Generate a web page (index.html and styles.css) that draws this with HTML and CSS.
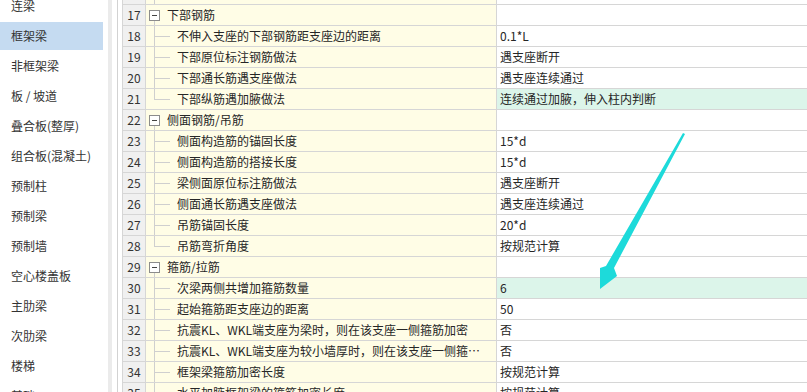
FILE: index.html
```html
<!DOCTYPE html>
<html lang="zh-CN">

<head>
  <meta charset="UTF-8">
  <meta name="viewport" content="width=device-width, initial-scale=1.0">
  <title>计算设置</title>
  <link rel="stylesheet" href="styles.css">
</head>

<body>
  <div class="page">
    <ul class="menu">
      <li>连梁</li>
      <li class="current">框架梁</li>
      <li>非框架梁</li>
      <li>板 / 坡道</li>
      <li>叠合板(整厚)</li>
      <li>组合板(混凝土)</li>
      <li>预制柱</li>
      <li>预制梁</li>
      <li>预制墙</li>
      <li>空心楼盖板</li>
      <li>主肋梁</li>
      <li>次肋梁</li>
      <li>楼梯</li>
      <li>基础</li>
    </ul>
    <div class="gutter"></div>

    <div class="grid-wrap">
      <table class="grid">
        <tr>
          <td class="num">16</td>
          <td class="name"><div class="cell"><span class="branch"></span><span class="label"></span></div></td>
          <td class="val"></td>
        </tr>
        <tr class="group">
          <td class="num">17</td>
          <td class="name"><div class="cell"><span class="toggle"></span><span class="label">下部钢筋</span></div></td>
          <td class="val"></td>
        </tr>
        <tr>
          <td class="num">18</td>
          <td class="name"><div class="cell"><span class="branch"></span><span class="label">不伸入支座的下部钢筋距支座边的距离</span></div></td>
          <td class="val">0.1*L</td>
        </tr>
        <tr>
          <td class="num">19</td>
          <td class="name"><div class="cell"><span class="branch"></span><span class="label">下部原位标注钢筋做法</span></div></td>
          <td class="val">遇支座断开</td>
        </tr>
        <tr>
          <td class="num">20</td>
          <td class="name"><div class="cell"><span class="branch"></span><span class="label">下部通长筋遇支座做法</span></div></td>
          <td class="val">遇支座连续通过</td>
        </tr>
        <tr class="last">
          <td class="num">21</td>
          <td class="name"><div class="cell"><span class="branch"></span><span class="label">下部纵筋遇加腋做法</span></div></td>
          <td class="val changed">连续通过加腋，伸入柱内判断</td>
        </tr>
        <tr class="group">
          <td class="num">22</td>
          <td class="name"><div class="cell"><span class="toggle"></span><span class="label">侧面钢筋/吊筋</span></div></td>
          <td class="val"></td>
        </tr>
        <tr>
          <td class="num">23</td>
          <td class="name"><div class="cell"><span class="branch"></span><span class="label">侧面构造筋的锚固长度</span></div></td>
          <td class="val">15*d</td>
        </tr>
        <tr>
          <td class="num">24</td>
          <td class="name"><div class="cell"><span class="branch"></span><span class="label">侧面构造筋的搭接长度</span></div></td>
          <td class="val">15*d</td>
        </tr>
        <tr>
          <td class="num">25</td>
          <td class="name"><div class="cell"><span class="branch"></span><span class="label">梁侧面原位标注筋做法</span></div></td>
          <td class="val">遇支座断开</td>
        </tr>
        <tr>
          <td class="num">26</td>
          <td class="name"><div class="cell"><span class="branch"></span><span class="label">侧面通长筋遇支座做法</span></div></td>
          <td class="val">遇支座连续通过</td>
        </tr>
        <tr>
          <td class="num">27</td>
          <td class="name"><div class="cell"><span class="branch"></span><span class="label">吊筋锚固长度</span></div></td>
          <td class="val">20*d</td>
        </tr>
        <tr class="last">
          <td class="num">28</td>
          <td class="name"><div class="cell"><span class="branch"></span><span class="label">吊筋弯折角度</span></div></td>
          <td class="val">按规范计算</td>
        </tr>
        <tr class="group">
          <td class="num">29</td>
          <td class="name"><div class="cell"><span class="toggle"></span><span class="label">箍筋/拉筋</span></div></td>
          <td class="val"></td>
        </tr>
        <tr>
          <td class="num">30</td>
          <td class="name"><div class="cell"><span class="branch"></span><span class="label">次梁两侧共增加箍筋数量</span></div></td>
          <td class="val changed">6</td>
        </tr>
        <tr>
          <td class="num">31</td>
          <td class="name"><div class="cell"><span class="branch"></span><span class="label">起始箍筋距支座边的距离</span></div></td>
          <td class="val">50</td>
        </tr>
        <tr>
          <td class="num">32</td>
          <td class="name"><div class="cell"><span class="branch"></span><span class="label">抗震KL、WKL端支座为梁时，则在该支座一侧箍筋加密</span></div></td>
          <td class="val">否</td>
        </tr>
        <tr>
          <td class="num">33</td>
          <td class="name"><div class="cell"><span class="branch"></span><span class="label">抗震KL、WKL端支座为较小墙厚时，则在该支座一侧箍筋加密</span></div></td>
          <td class="val">否</td>
        </tr>
        <tr>
          <td class="num">34</td>
          <td class="name"><div class="cell"><span class="branch"></span><span class="label">框架梁箍筋加密长度</span></div></td>
          <td class="val">按规范计算</td>
        </tr>
        <tr>
          <td class="num">35</td>
          <td class="name"><div class="cell"><span class="branch"></span><span class="label">水平加腋框架梁的箍筋加密长度</span></div></td>
          <td class="val">按规范计算</td>
        </tr>
      </table>
    </div>

    <!-- 标注箭头 -->
    <svg class="arrow" width="807" height="392" viewBox="0 0 807 392">
      <polygon points="683,133 685,134 614,268 617,276 600,289 600,268 606,266" fill="#1ddada" />
    </svg>
  </div>
</body>

</html>
```

FILE: styles.css
```css
* {
  padding: 0;
  margin: 0;
  list-style: none;
  box-sizing: border-box;
}

body {
  font-family: "Noto Sans CJK SC", "Noto Sans", sans-serif;
  font-size: 12px;
  color: #262626;
  background-color: #fff;
}

.page {
  display: flex;
  width: 807px;
  height: 392px;
  overflow: hidden;
  position: relative;
}

.menu {
  flex: none;
  width: 108px;
  margin-top: -8px;
}

.menu li {
  height: 28px;
  line-height: 28px;
  margin-bottom: 2px;
  padding-left: 11px;
  margin-right: 5px;
  color: #333;
  white-space: nowrap;
}

.menu li.current {
  background-color: #c5dbf1;
}

.gutter {
  flex: none;
  width: 4px;
  background-color: #ebebeb;
}

.grid-wrap {
  flex: 1;
  margin-left: 5px;
  padding-left: 4px;
  border-left: 1px solid #d2d2d2;
  overflow: hidden;
}

.grid {
  width: 720px;
  margin-top: -17px;
  border-collapse: separate;
  border-spacing: 0;
  border-top: 1px solid #d6d6d6;
  border-left: 1px solid #d6d6d6;
  table-layout: fixed;
}

.grid td {
  height: 20px;
  padding: 0;
  line-height: 20px;
  border-right: 1px solid #d6d6d6;
  border-bottom: 1px solid #d6d6d6;
  white-space: nowrap;
  overflow: hidden;
}

.grid .num {
  width: 23px;
  text-align: center;
  background-color: #f0f0f0;
  color: #333;
}

.grid .name {
  width: 351px;
  background-color: #fffde6;
}

.grid .val {
  padding-left: 3px;
  background-color: #fff;
}

.grid .val.changed {
  background-color: #dcf5ea;
}

.cell {
  display: flex;
  align-items: center;
  height: 20px;
}

.label {
  flex: 1;
  min-width: 0;
  padding-right: 4px;
  overflow: hidden;
  white-space: nowrap;
  text-overflow: ellipsis;
}

.toggle {
  flex: none;
  width: 11px;
  height: 11px;
  margin-left: 3px;
  margin-right: 7px;
  border: 1px solid #8c8c8c;
  background-color: #fff;
  position: relative;
}

.toggle::before {
  content: '';
  position: absolute;
  left: 2px;
  top: 4px;
  width: 5px;
  height: 1px;
  background-color: #444;
}

.toggle::after {
  content: '';
  position: absolute;
  left: 4px;
  top: 10px;
  height: 6px;
  border-left: 1px solid #cfcfcf;
}

.branch {
  flex: none;
  align-self: flex-start;
  width: 16px;
  height: 20px;
  margin-left: 8px;
  margin-right: 7px;
  border-left: 1px solid #cfcfcf;
  position: relative;
}

.branch::after {
  content: '';
  position: absolute;
  left: 0;
  top: 10px;
  width: 15px;
  border-top: 1px solid #cfcfcf;
}

.last .branch {
  height: 11px;
}

.arrow {
  position: absolute;
  left: 0;
  top: 0;
  pointer-events: none;
}
```
